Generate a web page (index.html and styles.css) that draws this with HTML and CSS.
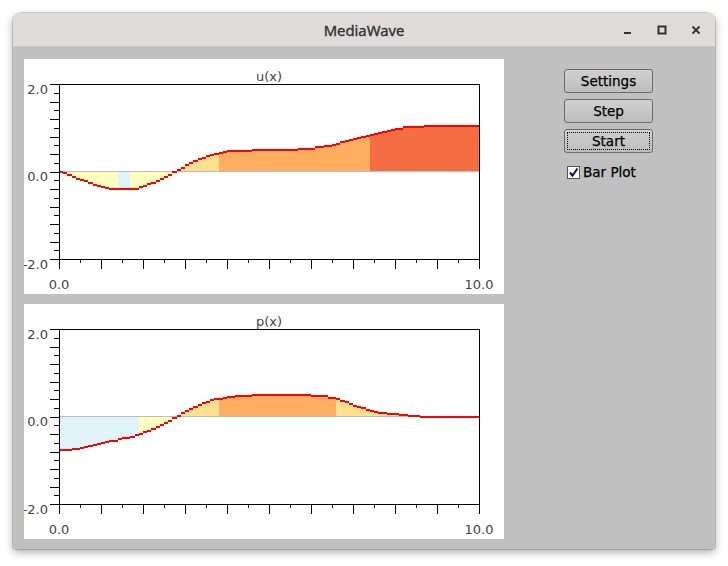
FILE: index.html
```html
<!DOCTYPE html>
<html lang="en">
<head>
<meta charset="utf-8">
<title>MediaWave</title>
<link rel="stylesheet" href="styles.css">
</head>
<body>
<div class="window">
  <header class="titlebar">
    <span class="title">MediaWave</span>
    <div class="controls">
      <button class="ctl" aria-label="Minimize"><svg width="10" height="10" viewBox="0 0 10 10"><rect x="1" y="7" width="7" height="2" fill="#2e3436"/></svg></button>
      <button class="ctl" aria-label="Maximize"><svg width="10" height="10" viewBox="0 0 10 10"><rect x="1.5" y="1.5" width="7" height="7" fill="none" stroke="#2e3436" stroke-width="2"/></svg></button>
      <button class="ctl" aria-label="Close"><svg width="10" height="10" viewBox="0 0 10 10"><path d="M1.5 1.5 L8.5 8.5 M8.5 1.5 L1.5 8.5" stroke="#2e3436" stroke-width="1.8" fill="none"/></svg></button>
    </div>
  </header>
  <main class="content">
    <section class="plots">
      <div class="plot-panel"><svg class="plot" id="plot-u" width="480" height="235" viewBox="0 0 480 235"></svg></div>
      <div class="plot-panel"><svg class="plot" id="plot-p" width="480" height="235" viewBox="0 0 480 235"></svg></div>
    </section>
    <aside class="side">
      <button class="btn">Settings</button>
      <button class="btn">Step</button>
      <button class="btn focused">Start</button>
      <label class="check">
        <span class="box"><svg width="11" height="11" viewBox="0 0 11 11"><path d="M2 5.5 L4.5 8.5 L9.5 1.5" fill="none" stroke="#0a0a7a" stroke-width="2"/></svg></span>
        <span class="check-label">Bar Plot</span>
      </label>
    </aside>
  </main>
</div>
<script src="script.js"></script>
</body>
</html>
```

FILE: styles.css
```css
* { box-sizing: border-box; }
html, body { margin: 0; padding: 0; }
body {
  background: #ffffff;
  width: 728px;
  height: 566px;
  overflow: hidden;
  font-family: "DejaVu Sans", sans-serif;
}
.window {
  margin: 13px 0 0 13px;
  width: 702px;
  border-radius: 8px 8px 2px 2px;
  box-shadow: 0 3px 9px rgba(0,0,0,0.35), 0 0 0 1px rgba(0,0,0,0.15);
  overflow: hidden;
}
.titlebar {
  height: 34px;
  background: #dedbd8;
  border-bottom: 1px solid #cdc7c2;
  display: grid;
  grid-template-columns: 1fr auto 1fr;
  align-items: center;
}
.title {
  grid-column: 2;
  font-family: "Noto Sans", sans-serif;
  font-size: 14.8px;
  font-weight: 400;
  color: #2e3436;
  -webkit-text-stroke: 0.35px #2e3436;
}
.controls {
  grid-column: 3;
  justify-self: end;
  display: flex;
  gap: 10px;
  padding-right: 7px;
}
.ctl {
  width: 24px;
  height: 24px;
  border: 0;
  padding: 0;
  background: none;
  display: flex;
  align-items: center;
  justify-content: center;
}
.content {
  background: #c0c0c0;
  height: 502px;
  display: flex;
  padding: 12px 11px;
}
.plots {
  display: flex;
  flex-direction: column;
  gap: 10px;
}
.plot-panel {
  width: 480px;
  height: 235px;
  background: #ffffff;
}
.plot { display: block; }
.plot-text {
  font-family: "DejaVu Sans", sans-serif;
  font-size: 13px;
  fill: #444444;
}
.side {
  margin-left: 60px;
  padding-top: 10px;
  display: flex;
  flex-direction: column;
  gap: 6px;
  width: 89px;
}
.btn {
  width: 89px;
  height: 24px;
  padding: 0;
  border: 1px solid #6c6c6c;
  border-radius: 3px;
  background: linear-gradient(#d0d0d0, #bdbdbd);
  font-family: "DejaVu Sans", sans-serif;
  font-size: 13.5px;
  color: #000000;
  -webkit-text-stroke: 0.25px #000000;
}
.btn.focused {
  outline: 1px dotted #000000;
  outline-offset: -4px;
}
.check {
  margin-top: 5px;
  margin-left: 3px;
  display: flex;
  align-items: center;
  gap: 3px;
  font-size: 13.5px;
  color: #000000;
  -webkit-text-stroke: 0.25px #000000;
}
.box {
  width: 13px;
  height: 13px;
  background: #ffffff;
  border: 1px solid #555555;
  display: flex;
  align-items: center;
  justify-content: center;
}
.box svg { display: block; }
```

FILE: script.js
```js
(function () {
  var NS = 'http://www.w3.org/2000/svg';
  var COL = { Y: '#ffffbf', B: '#e0f3f8', L: '#fee090', O: '#fdae61', R: '#f46d43' };

  function expand(runs) {
    var out = [];
    runs.forEach(function (r) { for (var i = 0; i < r[1]; i++) out.push(r[0]); });
    return out;
  }

  var plots = [
    {
      id: 'plot-u', title: 'u(x)',
      values: expand([[-0.02,1],[-0.04,1],[-0.09,1],[-0.13,1],[-0.16,1],[-0.19,1],[-0.22,1],[-0.27,1],[-0.30,1],[-0.32,1],[-0.35,1],[-0.37,1],[-0.39,2],[-0.41,3],[-0.39,2],[-0.36,1],[-0.32,1],[-0.29,1],[-0.26,1],[-0.21,1],[-0.17,1],[-0.13,1],[-0.08,1],[-0.02,1],[0.03,1],[0.09,1],[0.14,1],[0.19,1],[0.23,1],[0.28,1],[0.32,1],[0.35,1],[0.38,1],[0.41,1],[0.43,1],[0.45,1],[0.46,2],[0.48,4],[0.50,11],[0.52,4],[0.55,2],[0.58,2],[0.61,1],[0.64,1],[0.67,1],[0.70,1],[0.72,1],[0.75,1],[0.77,1],[0.80,1],[0.82,1],[0.84,1],[0.86,1],[0.89,1],[0.91,1],[0.93,1],[0.95,1],[0.97,2],[1.01,5],[1.03,13]]),
      colors: expand([['Y',14],['B',3],['Y',11],['L',10],['O',36],['R',26]])
    },
    {
      id: 'plot-p', title: 'p(x)',
      values: expand([[-0.77,3],[-0.74,2],[-0.72,1],[-0.70,1],[-0.67,1],[-0.65,1],[-0.63,1],[-0.61,1],[-0.59,1],[-0.57,1],[-0.55,1],[-0.52,1],[-0.50,1],[-0.48,1],[-0.46,1],[-0.43,1],[-0.40,1],[-0.36,1],[-0.32,1],[-0.28,1],[-0.23,1],[-0.19,1],[-0.14,1],[-0.10,1],[-0.04,1],[0.02,1],[0.09,1],[0.13,1],[0.17,1],[0.22,1],[0.26,1],[0.30,1],[0.34,1],[0.37,1],[0.39,1],[0.41,1],[0.42,1],[0.44,2],[0.47,4],[0.50,10],[0.49,4],[0.47,4],[0.415,2],[0.39,1],[0.36,1],[0.33,1],[0.29,1],[0.25,1],[0.225,1],[0.195,1],[0.16,1],[0.13,1],[0.11,1],[0.09,1],[0.07,1],[0.06,1],[0.05,2],[0.035,2],[0.02,3],[0,14]]),
      colors: expand([['B',19],['Y',9],['L',10],['O',28],['L',20],['Y',14]])
    }
  ];

  var X0 = 35, X1 = 455, Y0 = 25, Y1 = 200, ZY = 112.5, SY = 43.75, BW = 4.2;

  function el(tag, attrs, parent, text) {
    var e = document.createElementNS(NS, tag);
    for (var k in attrs) e.setAttribute(k, attrs[k]);
    if (text) e.textContent = text;
    parent.appendChild(e);
    return e;
  }

  plots.forEach(function (p) {
    var svg = document.getElementById(p.id);
    var fills = el('g', { 'shape-rendering': 'crispEdges' }, svg);
    var tops = el('g', { 'shape-rendering': 'crispEdges', stroke: '#ff0000', 'stroke-width': 2 }, svg);
    p.values.forEach(function (v, i) {
      var x = X0 + i * BW;
      var vy = Math.round(ZY - v * SY);
      var top = Math.min(vy, ZY), h = Math.abs(vy - ZY);
      if (h > 0) el('rect', { x: x.toFixed(2), y: top, width: (BW + 0.4).toFixed(2), height: h, fill: COL[p.colors[i]] }, fills);
      el('line', { x1: x.toFixed(2), x2: (x + BW).toFixed(2), y1: vy, y2: vy }, tops);
    });
    svg.insertBefore(el('line', { x1: X0, x2: X1, y1: ZY, y2: ZY, stroke: '#bcbcbc', 'stroke-width': 1, 'shape-rendering': 'crispEdges' }, svg), tops);

    var axes = el('g', { stroke: '#000', 'stroke-width': 1, 'shape-rendering': 'crispEdges', fill: 'none' }, svg);
    el('rect', { x: X0 + 0.5, y: Y0 + 0.5, width: X1 - X0, height: Y1 - Y0 }, axes);
    for (var k = 0; k <= 20; k++) {
      var ty = Math.round(Y0 + k * (Y1 - Y0) / 20) + 0.5;
      el('line', { x1: k % 2 === 0 ? 26 : 30, x2: X0, y1: ty, y2: ty }, axes);
      var tx = Math.round(X0 + k * (X1 - X0) / 20) + 0.5;
      el('line', { x1: tx, x2: tx, y1: Y1, y2: k % 2 === 0 ? 210 : 204 }, axes);
    }

    el('text', { x: 245, y: 22, 'text-anchor': 'middle', 'class': 'plot-text' }, svg, p.title);
    el('text', { x: 24, y: Y0 + 9.5, 'text-anchor': 'end', 'class': 'plot-text' }, svg, '2.0');
    el('text', { x: 24, y: ZY + 9.5, 'text-anchor': 'end', 'class': 'plot-text' }, svg, '0.0');
    el('text', { x: 24, y: Y1 + 9.5, 'text-anchor': 'end', 'class': 'plot-text' }, svg, '-2.0');
    el('text', { x: X0, y: 230, 'text-anchor': 'middle', 'class': 'plot-text' }, svg, '0.0');
    el('text', { x: X1, y: 230, 'text-anchor': 'middle', 'class': 'plot-text' }, svg, '10.0');
  });
})();
```
